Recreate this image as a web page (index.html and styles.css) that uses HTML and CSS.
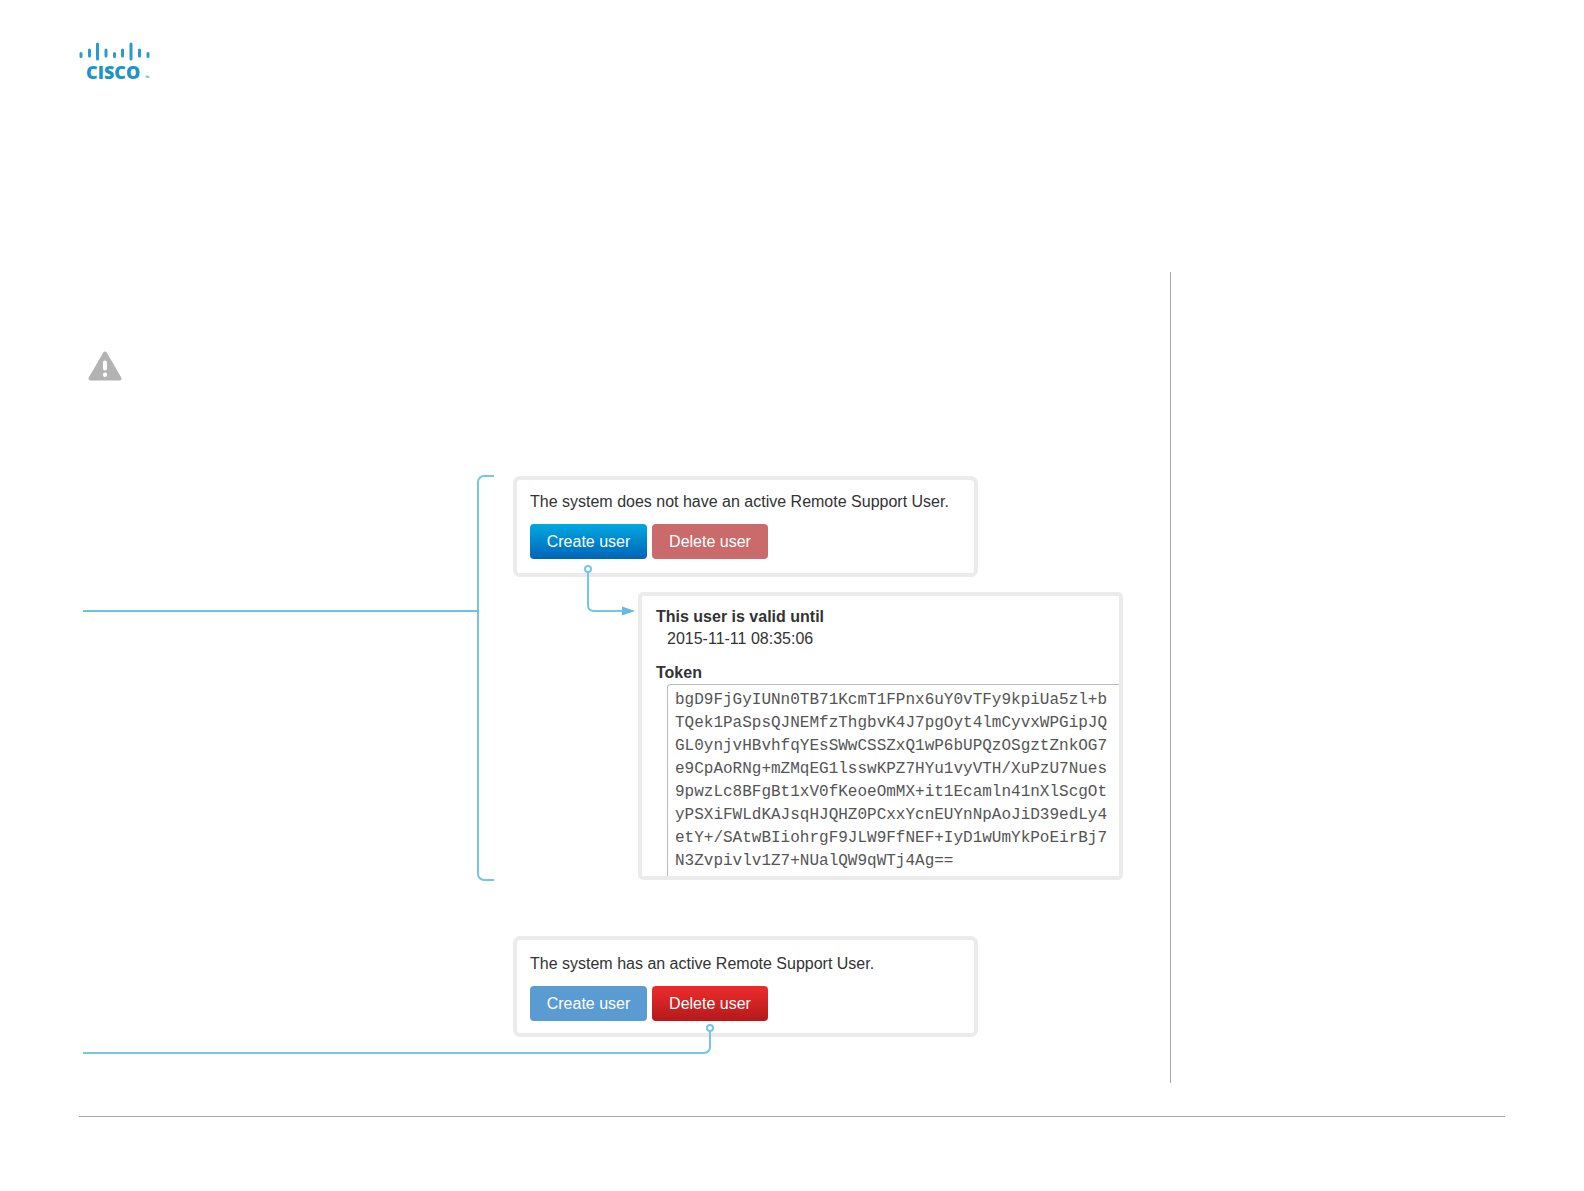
FILE: index.html
```html
<!DOCTYPE html>
<html lang="en">
<head>
<meta charset="utf-8">
<title>Remote Support User</title>
<link rel="stylesheet" href="styles.css">
</head>
<body>
<header class="header">
  <svg class="logo" width="80" height="48" viewBox="0 0 80 48" role="img" aria-label="Cisco">
    <g class="logo-bars">
      <path d="M2 11.5v3M10.500 8v6M18.500 2v15M27 8v6M35.500 11.500v3M43.500 8v6M52 2v15M60.500 8v6M69 11.500v3"/>
    </g>
    <text class="logo-name" x="7" y="37">CISCO</text>
    <text class="logo-mark" x="66" y="38">™</text>
  </svg>
</header>
<div class="content">
  <main class="article">
    <svg class="warning" width="34" height="30" viewBox="0 0 34 30" role="img" aria-label="Warning">
      <path class="warning-shape" d="M17 2.500 31.500 27.500H2.500Z"/>
      <path class="warning-sign" d="M17 11.500v6M17 23.500v.4"/>
    </svg>

    <section class="step step-create">
      <div class="lead"></div>
      <div class="bracket"></div>
      <div class="panels">
        <div class="card card-user">
          <p class="status">The system does not have an active Remote Support User.</p>
          <div class="actions">
            <button class="btn btn-create" type="button">Create user</button>
            <button class="btn btn-delete" type="button" disabled>Delete user</button>
          </div>
        </div>
        <svg class="arrow" width="54" height="52" viewBox="0 0 54 52" aria-hidden="true">
          <circle class="wire" cx="5" cy="5" r="3"/>
          <path class="wire" d="M5 8v33q0 6 6 6h29"/>
          <path class="arrow-head" d="M39 42.500 52 47 39 51.500Z"/>
        </svg>
        <div class="card card-token">
          <p class="label">This user is valid until</p>
          <p class="value">2015-11-11 08:35:06</p>
          <label class="label label-token" for="token">Token</label>
          <textarea class="token" id="token" rows="8" wrap="off" readonly spellcheck="false">bgD9FjGyIUNn0TB71KcmT1FPnx6uY0vTFy9kpiUa5zl+b
TQek1PaSpsQJNEMfzThgbvK4J7pgOyt4lmCyvxWPGipJQ
GL0ynjvHBvhfqYEsSWwCSSZxQ1wP6bUPQzOSgztZnkOG7
e9CpAoRNg+mZMqEG1lsswKPZ7HYu1vyVTH/XuPzU7Nues
9pwzLc8BFgBt1xV0fKeoeOmMX+it1Ecamln41nXlScgOt
yPSXiFWLdKAJsqHJQHZ0PCxxYcnEUYnNpAoJiD39edLy4
etY+/SAtwBIiohrgF9JLW9FfNEF+IyD1wUmYkPoEirBj7
N3Zvpivlv1Z7+NUalQW9qWTj4Ag==</textarea>
        </div>
      </div>
    </section>

    <section class="step step-delete">
      <div class="panels">
        <div class="card card-user">
          <p class="status status-active">The system has an active Remote Support User.</p>
          <div class="actions">
            <button class="btn btn-create" type="button" disabled>Create user</button>
            <button class="btn btn-delete" type="button">Delete user</button>
          </div>
        </div>
      </div>
      <div class="return-line"></div>
    </section>
  </main>
  <aside class="sidebar"></aside>
</div>
<footer class="footer"></footer>
</body>
</html>
```
FILE: styles.css
```css
*,
*::before {
  box-sizing: border-box;
}

body {
  margin: 0;
  padding: 0 79px;
  background: #fff;
  color: #333;
  font-family: "Liberation Sans", Arial, sans-serif;
  font-size: 16px;
}

p {
  margin: 0;
}

.header {
  height: 272px;
  padding-top: 42px;
}

.logo {
  display: block;
}

.logo-bars {
  fill: none;
  stroke: #2b9bcb;
  stroke-width: 3;
  stroke-linecap: round;
}

.logo-name {
  fill: #1e93c8;
  font: 800 18px "Open Sans", sans-serif;
}

.logo-mark {
  fill: #1e93c8;
  font: 6px "Open Sans", sans-serif;
}

.content {
  display: flex;
}

.article {
  flex: 1;
  padding: 79px 47px 46px 4px;
}

.sidebar {
  width: 335px;
  border-left: 1px solid #a8a8a8;
}

.footer {
  margin-top: 33px;
  border-top: 1px solid #a8a8a8;
}

.warning {
  display: block;
  margin-left: 5px;
}

.warning-shape {
  fill: #b3b3b3;
  stroke: #b3b3b3;
  stroke-width: 4;
  stroke-linejoin: round;
}

.warning-sign {
  fill: none;
  stroke: #fff;
  stroke-width: 4;
  stroke-linecap: round;
}

.step {
  position: relative;
  display: flex;
}

.step-create {
  margin-top: 95px;
}

.step-delete {
  justify-content: flex-end;
  margin-top: 56px;
}

.lead {
  flex: 1;
  height: 2px;
  margin-top: 134px;
  background: #6bc2e5;
}

.bracket {
  width: 17px;
  margin: -1px 19px -1px 0;
  border: 2px solid #75c5e4;
  border-right: 0;
  border-radius: 7px 0 0 7px;
}

.panels {
  position: relative;
  display: flex;
  flex-direction: column;
  gap: 15px;
  width: 610px;
}

.card {
  border: 4px solid #ebebeb;
  border-radius: 7px;
  background: #fff;
}

.card-user {
  width: 465px;
  height: 101px;
  padding: 11px 13px;
}

.card-token {
  align-self: flex-end;
  width: 485px;
  height: 288px;
  padding: 10px 0 0 14px;
  border-radius: 5px;
  overflow: hidden;
}

.status {
  margin-bottom: 11px;
  font-size: 16px;
  line-height: 22px;
}

.status-active {
  padding-top: 2px;
}

.actions {
  display: flex;
  gap: 5px;
}

.btn {
  width: 117px;
  height: 35px;
  padding: 0;
  border: 0;
  border-radius: 4px;
  color: #fff;
  font: 16px "Liberation Sans", Arial, sans-serif;
}

.btn-create {
  background: linear-gradient(#00a8e0, #0064b8);
}

.btn-create:disabled {
  background: #5a9bd2;
}

.btn-delete {
  width: 116px;
  background: linear-gradient(#ee2c2c, #b3191b);
}

.btn-delete:disabled {
  background: #cb6a6b;
}

.label {
  display: block;
  font-weight: 700;
  line-height: 22px;
}

.label-token {
  margin-top: 12px;
}

.value {
  padding-left: 11px;
  line-height: 22px;
}

.token {
  display: block;
  width: calc(100% - 11px);
  height: 204px;
  margin: 0 0 0 11px;
  padding: 4px 0 0 7px;
  border: 1px solid #bbb;
  border-right: 0;
  border-radius: 4px 0 0 0;
  outline: 0;
  resize: none;
  overflow: hidden;
  background: #fff;
  color: #555;
  font: 16px/23px "Liberation Mono", "Courier New", monospace;
}

.arrow {
  position: absolute;
  top: 88px;
  left: 70px;
}

.wire {
  fill: #fff;
  stroke: #75c5e4;
  stroke-width: 2;
}

path.wire {
  fill: none;
}

.arrow-head {
  fill: #62bbe2;
}

.return-line {
  position: absolute;
  top: 96px;
  right: 412px;
  left: 0;
  height: 22px;
  border: solid #75c5e4;
  border-width: 0 2px 2px 0;
  border-radius: 0 0 7px 0;
}

.return-line::before {
  content: "";
  position: absolute;
  top: -8px;
  right: -5px;
  width: 8px;
  height: 8px;
  border: 2px solid #75c5e4;
  border-radius: 50%;
  background: #fff;
}
```
